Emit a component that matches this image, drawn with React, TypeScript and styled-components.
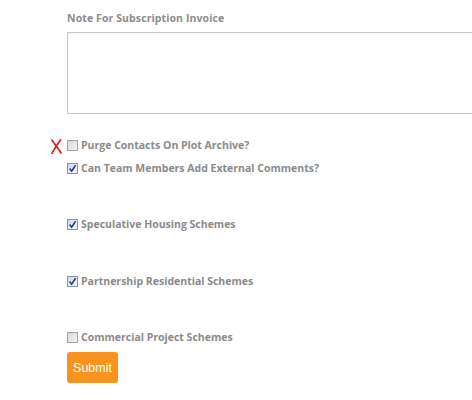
import React from "react";
import styled, { createGlobalStyle } from "styled-components";

const GlobalStyle = createGlobalStyle`
  html, body {
    margin: 0;
    padding: 0;
    background: #ffffff;
    overflow: hidden;
  }
`;

type Option = { label: string; checked: boolean; space: number; flagged?: boolean };

const options: Option[] = [
  { label: "Purge Contacts On Plot Archive?", checked: false, space: 10, flagged: true },
  { label: "Can Team Members Add External Comments?", checked: true, space: 43 },
  { label: "Speculative Housing Schemes", checked: true, space: 44 },
  { label: "Partnership Residential Schemes", checked: true, space: 43 },
  { label: "Commercial Project Schemes", checked: false, space: 8 },
];

export default function App() {
  return (
    <>
      <GlobalStyle />
      <Form>
        <FieldLabel>Note For Subscription Invoice</FieldLabel>
        <NoteArea />
        <Options>
          {options.map((o) => (
            <Row key={o.label} $space={o.space}>
              {o.flagged && (
                <Cross width="13" height="17" viewBox="0 0 13 17">
                  <path d="M1.5 1.5 L11.5 15.5" stroke="#e5161e" strokeWidth="1.7" fill="none" />
                  <path d="M11 1.2 Q6 8 1.6 15.8" stroke="#e5161e" strokeWidth="1.7" fill="none" />
                </Cross>
              )}
              <Box $checked={o.checked}>
                {o.checked && (
                  <svg width="9" height="9" viewBox="0 0 9 9">
                    <path d="M1.6 4.6 L3.6 7.2 L7.6 1.2" fill="none" stroke="#2a3f7a" strokeWidth="1.6" />
                  </svg>
                )}
              </Box>
              <RowText>{o.label}</RowText>
            </Row>
          ))}
        </Options>
        <SubmitButton>Submit</SubmitButton>
      </Form>
    </>
  );
}

const Form = styled.div`
  padding: 11px 0 0 67px;
  overflow: hidden;
  font-family: "Open Sans", "DejaVu Sans", sans-serif;
`;

const FieldLabel = styled.div`
  font-size: 10.5px;
  font-weight: 700;
  color: #8c8c8c;
  line-height: 14px;
  letter-spacing: 0.1px;
`;

const NoteArea = styled.div`
  margin-top: 7px;
  width: 430px;
  height: 80px;
  border: 1px solid #c8c8c8;
  box-shadow: inset 0 1px 2px rgba(0, 0, 0, 0.06);
`;

const Options = styled.div`
  display: flex;
  flex-direction: column;
  margin-top: 25px;
`;

const Row = styled.div<{ $space: number }>`
  position: relative;
  display: flex;
  align-items: center;
  gap: 3px;
  height: 13px;
  margin-bottom: ${(p) => p.$space}px;
`;

const Cross = styled.svg`
  position: absolute;
  left: -17px;
  top: -1px;
`;

const Box = styled.span<{ $checked: boolean }>`
  display: flex;
  align-items: center;
  justify-content: center;
  width: 9px;
  height: 9px;
  border: 1px solid #9a9a9a;
  background: ${(p) =>
    p.$checked
      ? "linear-gradient(135deg, #cfd9e8 0%, #f4f7fb 100%)"
      : "linear-gradient(135deg, #d6d6d6 0%, #f7f7f7 100%)"};
  border-color: ${(p) => (p.$checked ? "#8595b0" : "#a3a3a3")};
`;

const RowText = styled.span`
  font-size: 10.5px;
  font-weight: 700;
  color: #8a8a8a;
  line-height: 13px;
  white-space: nowrap;
`;

const SubmitButton = styled.button`
  display: block;
  width: 51px;
  height: 31px;
  padding: 0;
  border: none;
  border-radius: 3px;
  background: #f7931e;
  color: #ffffff;
  font-family: "Liberation Sans", Arial, sans-serif;
  font-size: 12.5px;
`;
